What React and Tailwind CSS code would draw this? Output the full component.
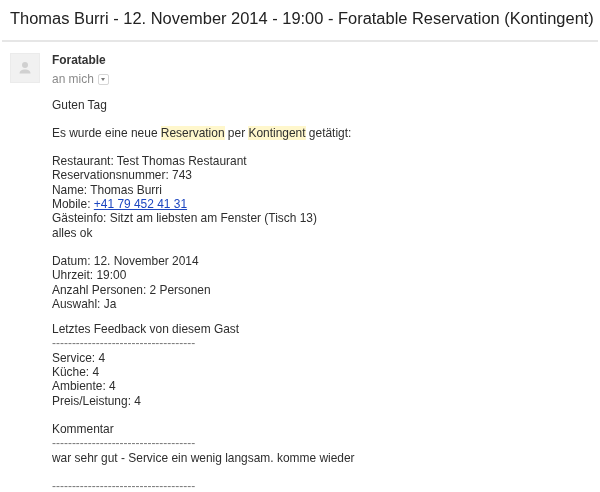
import React from 'react';

const Mark = ({ children }) => <span className="bg-[#fff7cc]">{children}</span>;

const DASHES = '------------------------------------';

export default function App() {
  return (
    <div className="w-[600px] h-[492px] overflow-hidden bg-white font-['Liberation_Sans',Arial,sans-serif] text-[#2e2e2e] blur-[0.35px]">
      <div className="h-[42px] mx-[2px] pl-[8px] pt-[6px] border-b-2 border-[#e6e6e6] text-[16.45px] leading-[24px] text-[#222] whitespace-nowrap">
        Thomas Burri - 12. November 2014 - 19:00 - Foratable Reservation (Kontingent)
      </div>

      <div className="flex pl-[10px] pt-[11px]">
        <div className="w-[30px] h-[30px] bg-[#f1f1f1] border border-[#ebebeb] flex items-center justify-center shrink-0">
          <svg width="14" height="16" viewBox="0 0 14 16" className="text-[#d0d0d0]">
            <circle cx="7" cy="5" r="3" fill="currentColor" />
            <path d="M1.5 13.5c0-2.8 2.400-4 5.500-4s5.500 1.200 5.500 4z" fill="currentColor" />
          </svg>
        </div>

        <div className="ml-[12px] text-[11.95px] leading-[14.3px] whitespace-nowrap">
          <div className="font-bold text-[#333]">Foratable</div>
          <div className="flex items-center mt-[5px] text-[#8a8a8a]">
            an mich
            <span className="ml-[4px] w-[11px] h-[11px] border border-[#d5d5d5] rounded-[2px] flex items-center justify-center">
              <span className="border-x-[2.5px] border-x-transparent border-t-[3px] border-t-[#777]" />
            </span>
          </div>

          <p className="mt-[11px]">Guten Tag</p>
          <p className="mt-[14px]">
            Es wurde eine neue <Mark>Reservation</Mark> per <Mark>Kontingent</Mark> getätigt:
          </p>

          <div className="mt-[14px]">
            <div>Restaurant: Test Thomas Restaurant</div>
            <div>Reservationsnummer: 743</div>
            <div>Name: Thomas Burri</div>
            <div>Mobile: <a href="#" className="text-[#1c46c0] underline">+41 79 452 41 31</a></div>
            <div>Gästeinfo: Sitzt am liebsten am Fenster (Tisch 13)</div>
            <div>alles ok</div>
          </div>

          <div className="mt-[14px]">
            <div>Datum: 12. November 2014</div>
            <div>Uhrzeit: 19:00</div>
            <div>Anzahl Personen: 2 Personen</div>
            <div>Auswahl: Ja</div>
          </div>

          <div className="mt-[11px]">
            <div>Letztes Feedback von diesem Gast</div>
            <div className="text-[#777]">{DASHES}</div>
            <div>Service: 4</div>
            <div>Küche: 4</div>
            <div>Ambiente: 4</div>
            <div>Preis/Leistung: 4</div>
          </div>

          <div className="mt-[14px]">
            <div>Kommentar</div>
            <div className="text-[#777]">{DASHES}</div>
            <div>war sehr gut - Service ein wenig langsam. komme wieder</div>
          </div>

          <div className="mt-[14px] text-[#777]">{DASHES}</div>
        </div>
      </div>
    </div>
  );
}
